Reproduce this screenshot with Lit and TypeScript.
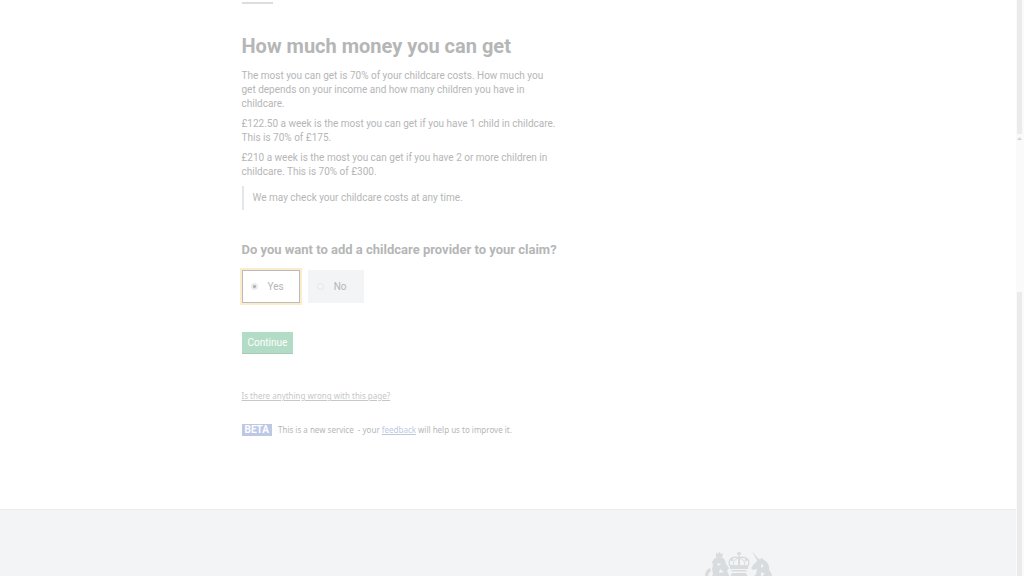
import { LitElement, html, css } from "lit";
import { customElement, state } from "lit/decorators.js";

@customElement("royal-crest")
class RoyalCrest extends LitElement {
  static styles = css`
    :host { display: block; }
    svg { display: block; width: 68px; height: 56px; }
  `;
  render() {
    return html`<svg viewBox="0 0 68 56" fill="#d9dcde" stroke="none" aria-hidden="true">
      <circle cx="34" cy="2.4" r="1.6" />
      <path d="M33.3 3h1.4v4h-1.4zM31.8 2h4.4v1.2h-4.4z" />
      <path d="M25 15c-3-7 3-10 9-8 6-2 12 1 9 8z" fill="none" stroke="#d9dcde" stroke-width="1.4" />
      <path d="M29 15c-2-4 1-7 5-8 4 1 7 4 5 8" fill="none" stroke="#d9dcde" stroke-width="1" />
      <path d="M33 7h2v8h-2zM25 14.5h18v3.6H25zM26.500 19h15v1.500h-15z" />
      <circle cx="27" cy="9" r="1.300" /><circle cx="41" cy="9" r="1.300" />
      <path d="M27 22h14l3 6-2 20-8 6-8-6-2-20z" />
      <path d="M11 1l1.500 2 2-2 1.500 2 2-1-.6 4h-6.500z" />
      <path d="M10 7c4-2 8-1 10 2l1 4 3 4-2 3 3 6-2 12-8 2-8-4-1-8 2-5-1-5 1-4-1-3z" />
      <path d="M4 34c-5-5-5-11-2-15l3-2 1 3-2 2c-2 4 0 7 3 10z" />
      <path d="M47 0.500l8 9-2 1.500z" />
      <path d="M53 9l4-2 2 2c4 2 6 6 5 11l-1 6-2 12-9 2-7-4 2-9 4-4 1-5-4 1-2-2 3-4z" />
      <path d="M63 34c5-5 5-10 2-14l-2-1-1 3 1 2c1 3 0 5-3 8z" />
      <path d="M12 12l4 1-3 2zM15 18l4 3-5 1zM56 13l3 2-3 2zM56 21l4 2-4 3z" fill="#f3f4f5" />
    </svg>`;
  }
}

@customElement("app-root")
class AppRoot extends LitElement {
  @state() private answer = "yes";

  static styles = css`
    :host {
      display: grid;
      grid-template-columns: 1fr 8px;
      height: 100vh;
      overflow: hidden;
      background: #fff;
      color: #b5b6b6;
      font: 10px/14px Roboto, "Noto Sans", sans-serif;
    }
    .page { display: flex; flex-direction: column; min-width: 0; overflow: hidden; }
    .wrap { box-sizing: border-box; width: 100%; max-width: 533px; margin: 0 auto; }
    main { flex: none; padding-bottom: 73px; }
    .rule { width: 31px; height: 2px; margin: 2px 0 0; border: 0; background: #dcdddd; }
    h1 { margin: 30px 0 11px; font-size: 20px; line-height: 24px; font-weight: 700; }
    p { max-width: 316px; margin: 0 0 6px; }
    .inset { margin: 7px 0 0; padding: 5px 9px; border-left: 2px solid #e5e6e7; }
    fieldset { margin: 31px 0 0; padding: 0; border: 0; }
    legend { padding: 0; font-size: 13px; line-height: 18px; font-weight: 700; }
    .options { display: flex; gap: 8px; margin-top: 11px; }
    .option {
      box-sizing: border-box;
      display: flex;
      align-items: center;
      gap: 10px;
      height: 33px;
      padding: 0 17px 0 9px;
      background: #f3f4f5;
    }
    .option.on {
      padding: 0 15px 0 8px;
      background: #fff;
      border: 1px solid #b9bbbd;
      outline: 2px solid #fdeccb;
    }
    .option input {
      appearance: none;
      width: 7px;
      height: 7px;
      margin: 0;
      border: 1px solid #e4e5e6;
      border-radius: 50%;
      background: #f5f5f5;
      outline: 0;
    }
    .option input:checked { background: radial-gradient(circle, #b0b0b0 1px, #eee 2px); }
    button {
      display: block;
      height: 22px;
      margin: 29px 0 0;
      padding: 1px 6px 0;
      border: 0;
      border-bottom: 1px solid #a6c9b8;
      background: #b2dcc6;
      color: #fff;
      font: inherit;
    }
    .small { font-family: "Noto Sans", sans-serif; font-size: 8px; line-height: 12px; }
    .problem { display: table; margin-top: 36px; color: #c5c7c8; }
    .phase { display: flex; gap: 6px; margin-top: 22px; }
    .tag { padding: 0 3px; background: #bdc8e4; color: #fff; font: 700 10px/12px Roboto, sans-serif; }
    .feedback { color: #bdc8e4; }
    footer { flex: 1; border-top: 1px solid #eaebec; background: #f3f4f5; }
    .crest { display: flex; justify-content: flex-end; padding: 41px 2px 0 0; }
    .bar { display: flex; flex-direction: column; padding: 0 2px 0 1px; background: #fafafa; }
    .thumb { height: 134px; background: #ebebeb; }
    .arrow { height: 158px; }
    .arrow svg { display: block; width: 5px; height: 8px; }
    .rest { flex: 1; background: #ebebeb; }
  `;

  private option(value: string, label: string) {
    const on = this.answer === value;
    return html`<label class="option ${on ? "on" : ""}">
      <input type="radio" name="provider" .value=${value} .checked=${on}
        @change=${() => (this.answer = value)} />${label}</label>`;
  }

  render() {
    return html`
      <div class="page">
        <main class="wrap">
          <hr class="rule" />
          <h1>How much money you can get</h1>
          <p>The most you can get is 70% of your childcare costs. How much you get depends on your income and how many children you have in childcare.</p>
          <p>£122.50 a week is the most you can get if you have 1 child in childcare. This is 70% of £175.</p>
          <p>£210 a week is the most you can get if you have 2 or more children in childcare. This is 70% of £300.</p>
          <div class="inset">We may check your childcare costs at any time.</div>
          <fieldset>
            <legend>Do you want to add a childcare provider to your claim?</legend>
            <div class="options">${this.option("yes", "Yes")}${this.option("no", "No")}</div>
          </fieldset>
          <button type="button">Continue</button>
          <a class="problem small" href="#problem">Is there anything wrong with this page?</a>
          <div class="phase small">
            <strong class="tag">BETA</strong>
            <span>This is a new service &nbsp;- your <a class="feedback" href="#feedback">feedback</a> will help us to improve it.</span>
          </div>
        </main>
        <footer><div class="wrap crest"><royal-crest></royal-crest></div></footer>
      </div>
      <div class="bar">
        <div class="thumb"></div>
        <div class="arrow"><svg viewBox="0 0 5 8"><path d="M0 6l2.500-3L5 6z" fill="#d4d4d4" /></svg></div>
        <div class="rest"></div>
      </div>`;
  }
}
